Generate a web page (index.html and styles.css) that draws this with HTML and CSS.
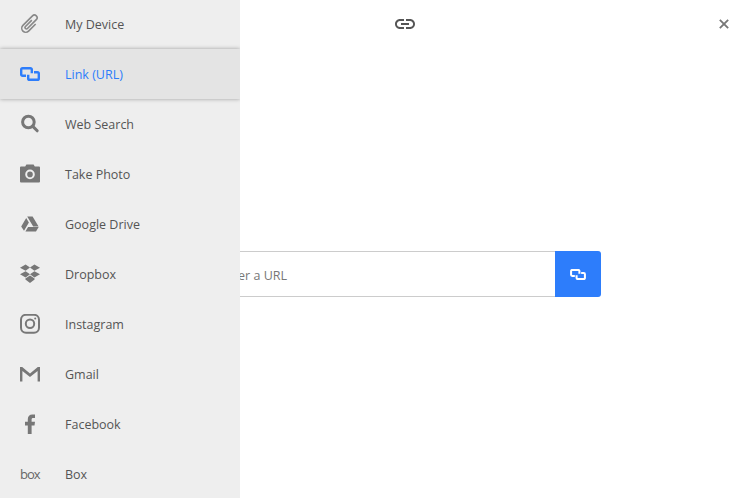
FILE: index.html
```html
<html>
<head>
    <meta charset="UTF-8"/>
    <title>Upload</title>
    <link rel="stylesheet" href="styles.css">
</head>
<body>
    <div id="main">
        <div class="head">
            <svg class="head-icon" viewBox="0 0 24 24"><path d="M3.9 12c0-1.71 1.39-3.1 3.1-3.1h4V7H7c-2.76 0-5 2.24-5 5s2.24 5 5 5h4v-1.9H7c-1.71 0-3.1-1.39-3.1-3.1zM8 13h8v-2H8v2zm9-6h-4v1.9h4c1.71 0 3.1 1.39 3.1 3.1s-1.39 3.1-3.1 3.1h-4V17h4c2.76 0 5-2.24 5-5s-2.24-5-5-5z"/></svg>
            <svg class="close-icon" viewBox="0 0 12 12"><path d="M1 1L11 11M11 1L1 11"/></svg>
        </div>
        <div class="body">
            <div class="url-form">
                <div class="url-input">Enter a URL</div>
                <div class="url-button">
                    <svg class="chain" viewBox="0 0 20 14"><path d="M6 8.8H2.6A1.4 1.4 0 0 1 1.2 7.4V2.6A1.4 1.4 0 0 1 2.6 1.2H10.4A1.4 1.4 0 0 1 11.8 2.6V6.2M14 5.2H17.4A1.4 1.4 0 0 1 18.8 6.6V11.4A1.4 1.4 0 0 1 17.4 12.8H9.6A1.4 1.4 0 0 1 8.2 11.4V7.8"/></svg>
                </div>
            </div>
        </div>
    </div>

    <div id="side">
        <div class="item">
            <svg class="icon" viewBox="0 0 20 20"><path class="clip" d="M14 6V16A4 4 0 0 1 6 16V2.5A2.7 2.7 0 0 1 11.4 2.5V15A1.4 1.4 0 0 1 8.6 15V6" transform="rotate(45 10 10)"/></svg>
            <span>My Device</span>
        </div>
        <div class="item live">
            <svg class="icon chain" viewBox="0 0 20 14"><path d="M6 8.8H2.6A1.4 1.4 0 0 1 1.2 7.4V2.6A1.4 1.4 0 0 1 2.6 1.2H10.4A1.4 1.4 0 0 1 11.8 2.6V6.2M14 5.2H17.4A1.4 1.4 0 0 1 18.8 6.6V11.4A1.4 1.4 0 0 1 17.4 12.8H9.6A1.4 1.4 0 0 1 8.2 11.4V7.8"/></svg>
            <span>Link (URL)</span>
        </div>
        <div class="item">
            <svg class="icon" viewBox="0 0 20 20"><circle class="thick" cx="8.4" cy="8" r="5.8"/><path class="thick" d="M12.8 12.4L17.2 16.8"/></svg>
            <span>Web Search</span>
        </div>
        <div class="item">
            <svg class="icon" viewBox="0 0 20 20"><path fill-rule="evenodd" d="M1 2.6H5.2L6.4 .4H13.6L14.8 2.6H19A1 1 0 0 1 20 3.6V17.4A1 1 0 0 1 19 18.4H1A1 1 0 0 1 0 17.4V3.6A1 1 0 0 1 1 2.6ZM10 5.6A4.8 4.8 0 1 0 10 15.2A4.8 4.8 0 1 0 10 5.6ZM10 7.6A2.8 2.8 0 1 1 10 13.2A2.8 2.8 0 1 1 10 7.6Z"/></svg>
            <span>Take Photo</span>
        </div>
        <div class="item">
            <svg class="icon" viewBox="0 0 20 20"><path d="M7.2 2.5H12.6L18.6 12.5H13.2ZM6.2 3.9L8.9 8.4L4 16.8L1.2 12.4ZM5.4 17.4L8.1 12.9H18.7L16 17.4Z"/></svg>
            <span>Google Drive</span>
        </div>
        <div class="item">
            <svg class="icon" viewBox="0 0 20 20"><path d="M5.6 .6L10 3.6L5.6 6.8L0 3.8ZM14.4 .6L20 3.8L14.4 6.8L10 3.6ZM5.6 7.2L10 10.2L5.6 13.4L0 10.2ZM14.4 7.2L20 10.2L14.4 13.4L10 10.2ZM5.4 14.4L10 11.4L14.6 14.4V15.6L10 19L5.4 15.6Z"/></svg>
            <span>Dropbox</span>
        </div>
        <div class="item">
            <svg class="icon" viewBox="0 0 20 20"><rect class="ring" x="1" y=".8" width="18" height="18" rx="5"/><circle class="ring" cx="10" cy="9.8" r="4.2"/><circle cx="15.2" cy="4.6" r="1"/></svg>
            <span>Instagram</span>
        </div>
        <div class="item">
            <svg class="icon" viewBox="0 0 20 20"><path d="M0 3H2.2L10 9.6L17.8 3H20V17.6H17.6V7L10 13L2.4 7V17.6H0Z"/></svg>
            <span>Gmail</span>
        </div>
        <div class="item">
            <svg class="icon" viewBox="0 0 20 20"><path d="M7.8 20V11.4H5V7.8H7.8V5.2C7.8 2 9.6 .4 12.4 .4H15V4H13.2C12 4 11.6 4.6 11.6 5.6V7.8H15L14.5 11.4H11.6V20Z"/></svg>
            <span>Facebook</span>
        </div>
        <div class="item">
            <div class="icon box">box</div>
            <span>Box</span>
        </div>
    </div>
</body>
</html>
```

FILE: styles.css
```css
body {
    font-family: "Open Sans", "Liberation Sans", sans-serif;
    margin: 0px;
    padding: 0px;
    height: 498px;
    overflow: hidden;
    font-size: 12.5px;
    color: #555;
    background-color: #fff;
}

#main {
    display: flex;
    flex-direction: column;
    height: 498px;
}

.head {
    display: flex;
    align-items: center;
    justify-content: space-between;
    height: 48px;
    padding: 0px 20px 0px 393px;
}

.head-icon {
    width: 24px;
    height: 24px;
    fill: #555;
}

.close-icon {
    width: 10px;
    height: 10px;
    fill: none;
    stroke: #777;
    stroke-width: 2.2;
}

.body {
    padding: 203px 148px 0px;
}

.url-form {
    display: flex;
    height: 46px;
}

.url-input {
    flex: 1;
    padding: 1px 0px 0px 70px;
    line-height: 45px;
    color: #777;
    border: solid 1px #ccc;
    border-right: 0px;
}

.url-button {
    display: flex;
    align-items: center;
    justify-content: center;
    width: 46px;
    background-color: #2d7dfb;
    border-radius: 0px 3px 3px 0px;
}

.url-button .chain {
    width: 16px;
    height: 11px;
    stroke: #fff;
    stroke-width: 2.6;
}

.chain {
    fill: none;
}

#side {
    position: absolute;
    top: -1px;
    left: 0px;
    width: 240px;
    overflow: hidden;
    background-color: #eee;
}

.item {
    display: flex;
    align-items: center;
    height: 50px;
}

.item span {
    margin-left: 25px;
}

.icon {
    flex: none;
    width: 20px;
    height: 20px;
    margin-left: 20px;
    fill: #777;
}

.clip {
    fill: none;
    stroke: #888;
    stroke-width: 1.6;
}

.ring {
    fill: none;
    stroke: #777;
    stroke-width: 2;
}

.thick {
    fill: none;
    stroke: #777;
    stroke-width: 3;
    stroke-linecap: round;
}

.box {
    font-size: 13px;
    line-height: 20px;
    letter-spacing: -1px;
    color: #666;
}

.live {
    color: #2d7dfb;
    background-color: #e4e4e4;
    box-shadow: 0px 0px 4px rgba(0, 0, 0, 0.35);
}

.item .chain {
    height: 14px;
    fill: none;
    stroke: #2d7dfb;
    stroke-width: 2.4;
}
```
